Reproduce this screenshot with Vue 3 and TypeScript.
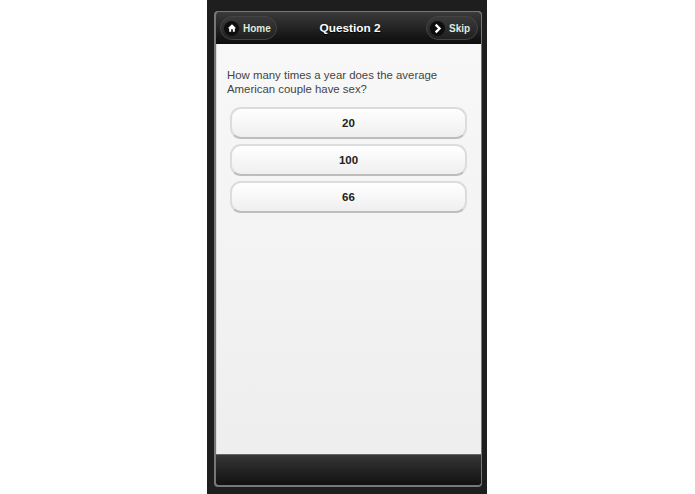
<script setup lang="ts">
const answers: string[] = ['20', '100', '66']
</script>

<template>
  <div class="page">
    <div class="phone">
      <div class="screen">
        <header class="bar">
          <button class="nav">
            <span class="dot">
              <svg viewBox="0 0 12 12" width="10" height="10"><path d="M6 1.5 11 6.3H9.4V10.5H7V7.6H5V10.5H2.6V6.3H1Z" fill="#fff" /></svg>
            </span>
            <span>Home</span>
          </button>
          <h1 class="title">Question 2</h1>
          <button class="nav skip">
            <span class="dot">
              <svg viewBox="0 0 12 12" width="11" height="11"><path d="M4 1.8 8.2 6 4 10.2" fill="none" stroke="#fff" stroke-width="2.6" /></svg>
            </span>
            <span>Skip</span>
          </button>
        </header>
        <main class="content">
          <p class="question">How many times a year does the average<br />American couple have sex?</p>
          <div class="answers">
            <button v-for="a in answers" :key="a" class="answer">{{ a }}</button>
          </div>
        </main>
        <footer class="foot"></footer>
      </div>
    </div>
  </div>
</template>

<style scoped>
.page {
  width: 695px;
  height: 494px;
  background: #fff;
  display: flex;
  justify-content: center;
  padding-right: 1px;
  box-sizing: border-box;
  font-family: "Liberation Sans", Arial, sans-serif;
  overflow: hidden;
}
.phone {
  width: 280px;
  height: 494px;
  box-sizing: border-box;
  background: #1e1e1e;
  padding: 11px 5px 7px 7px;
}
.screen {
  height: 100%;
  box-sizing: border-box;
  border: 1px solid #777;
  border-width: 1px 1px 2px 2px;
  border-radius: 4px;
  overflow: hidden;
  display: flex;
  flex-direction: column;
  background: #f0f0f0;
}
.bar {
  height: 32px;
  flex: none;
  background: linear-gradient(#3a3a3a, #0c0c0c);
  display: flex;
  align-items: center;
  justify-content: space-between;
  padding: 0 3px 0 4px;
  box-sizing: border-box;
}
.nav {
  height: 24px;
  width: 57px;
  border: 1px solid #444;
  border-radius: 12px;
  background: linear-gradient(#3a3a3a, #202020);
  color: #dfeadf;
  font: bold 10px "Liberation Sans", Arial, sans-serif;
  display: flex;
  align-items: center;
  gap: 4px;
  padding: 0 0 0 3px;
  box-sizing: border-box;
}
.skip {
  width: 52px;
  gap: 4px;
}
.dot {
  width: 15px;
  height: 15px;
  border-radius: 50%;
  background: #0e0e0e;
  display: flex;
  align-items: center;
  justify-content: center;
}
.title {
  margin: 0 3px 0 0;
  font-size: 11.8px;
  font-weight: bold;
  color: #fff;
  text-shadow: 0 1px 1px #000;
}
.content {
  flex: 1;
  background: linear-gradient(#f8f8f8, #eee);
  padding: 24px 12px 0 10px;
  border-left: 1px solid #ddd;
}
.question {
  margin: 0 0 11px;
  font-size: 11.4px;
  line-height: 14px;
  color: #444;
}
.answers {
  display: flex;
  flex-direction: column;
  gap: 5px;
  padding: 0 2px 0 3px;
}
.answer {
  height: 32px;
  border: 2px solid #dcdcdc;
  border-bottom-color: #bdbdbd;
  border-radius: 11px;
  background: linear-gradient(#fff, #efefef);
  font: bold 11.5px "Liberation Sans", Arial, sans-serif;
  color: #222;
  padding: 0;
}
.foot {
  height: 31px;
  flex: none;
  background: linear-gradient(#363636, #111);
  border-top: 1px solid #666;
  box-sizing: border-box;
}
</style>
